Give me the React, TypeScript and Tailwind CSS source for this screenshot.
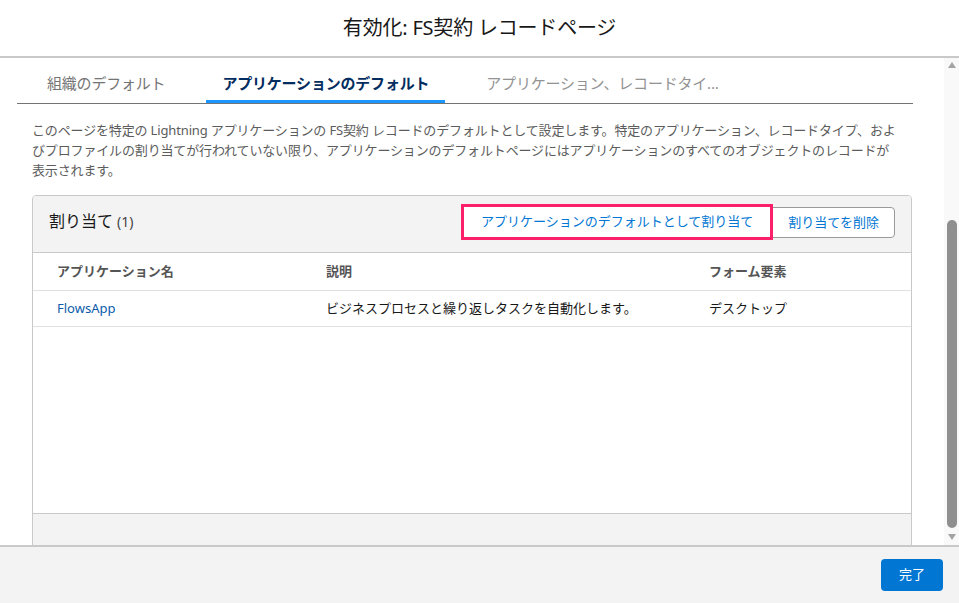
import React from "react";

const font = { fontFamily: '"Noto Sans", "Noto Sans CJK JP", sans-serif' };

export default function App() {
  return (
    <div className="w-[959px] h-[603px] flex flex-col bg-white overflow-hidden" style={font}>
      {/* Header */}
      <div className="h-[58px] shrink-0 border-b-2 border-[#c9c9c9] flex items-center justify-center">
        <h1 className="text-[20px] text-[#181818] leading-none tracking-[-0.2px]">有効化: FS契約 レコードページ</h1>
      </div>

      {/* Scroll area */}
      <div className="flex-1 min-h-0 flex overflow-hidden">
        <div className="flex-1 min-w-0 pl-[17px] pr-[31px] pt-[5px] overflow-hidden">
          {/* Tabs */}
          <div className="h-[41px] border-b border-[#747474] flex items-stretch pl-[14px] gap-[25px] text-[15px] tracking-[-0.2px]">
            <div className="px-[16px] flex items-center text-[#747474]">組織のデフォルト</div>
            <div className="px-[16px] flex items-center text-[#032d60] font-bold border-b-[3px] border-[#1b96ff] pt-[3px]">アプリケーションのデフォルト</div>
            <div className="px-[16px] flex items-center text-[#939393]">アプリケーション、レコードタイ...</div>
          </div>

          <div className="pl-[15px] pr-[1px]">
            <p className="mt-[16px] text-[13px] leading-[20px] text-[#5c5c5c] tracking-[-0.15px]">
              このページを特定の Lightning アプリケーションの FS契約 レコードのデフォルトとして設定します。特定のアプリケーション、レコードタイプ、およ
              <br />
              びプロファイルの割り当てが行われていない限り、アプリケーションのデフォルトページにはアプリケーションのすべてのオブジェクトのレコードが
              <br />
              表示されます。
            </p>

            {/* Card */}
            <div className="mt-[15px] border border-[#c9c9c9] rounded-t-[4px] overflow-hidden">
              <div className="h-[57px] bg-[#f3f3f3] border-b border-[#c9c9c9] flex items-start justify-between pl-[16px] pr-[16px]">
                <div className="mt-[13px] flex items-baseline gap-[4px]">
                  <span className="text-[16px] text-[#181818]">割り当て</span>
                  <span className="text-[14px] text-[#444444]">(1)</span>
                </div>
                <div className="mt-[8px] flex items-start">
                  <div className="border-[3px] border-[#fc1f6a] relative z-10 -mr-[1px]">
                    <button className="h-[30px] bg-white px-[17px] text-[13px] text-[#0176d3] flex items-center">
                      アプリケーションのデフォルトとして割り当て
                    </button>
                  </div>
                  <button className="mt-[3px] h-[31px] bg-white border border-[#9a9a9a] rounded-r-[4px] px-[15px] text-[13px] text-[#0176d3] flex items-center">
                    割り当てを削除
                  </button>
                </div>
              </div>

              {/* Table */}
              <div className="grid grid-cols-[293px_383px_1fr] h-[38px] border-b border-[#e0e0e0] items-center text-[13px] font-bold text-[#555555]">
                <div className="pl-[24px]">アプリケーション名</div>
                <div>説明</div>
                <div>フォーム要素</div>
              </div>
              <div className="grid grid-cols-[293px_383px_1fr] h-[36px] border-b border-[#e0e0e0] items-center text-[13px] text-[#181818]">
                <div className="pl-[24px] text-[#0b5cab]">FlowsApp</div>
                <div>ビジネスプロセスと繰り返しタスクを自動化します。</div>
                <div>デスクトップ</div>
              </div>
              <div className="h-[187px] bg-white border-b border-[#c9c9c9]"></div>
              <div className="h-[60px] bg-[#f3f3f3]"></div>
            </div>
          </div>
        </div>

        {/* Scrollbar drawing */}
        <div className="w-[15px] shrink-0 bg-[#f9f9f9] flex flex-col items-center relative">
          <svg width="8" height="6" viewBox="0 0 8 6" className="mt-[4px]">
            <polygon points="4,0 8,6 0,6" fill="#a3a3a3" />
          </svg>
          <div className="mt-[152px] w-[10px] h-[308px] rounded-full bg-[#8f8f8f]"></div>
          <svg width="8" height="6" viewBox="0 0 8 6" className="mt-[6px]">
            <polygon points="0,0 8,0 4,6" fill="#a3a3a3" />
          </svg>
        </div>
      </div>

      {/* Footer */}
      <div className="h-[58px] shrink-0 border-t-2 border-[#c9c9c9] bg-[#f3f3f3] flex items-center justify-end pr-[16px]">
        <button className="h-[32px] px-[18px] rounded-[4px] bg-[#0176d3] text-white text-[13px]">完了</button>
      </div>
    </div>
  );
}
